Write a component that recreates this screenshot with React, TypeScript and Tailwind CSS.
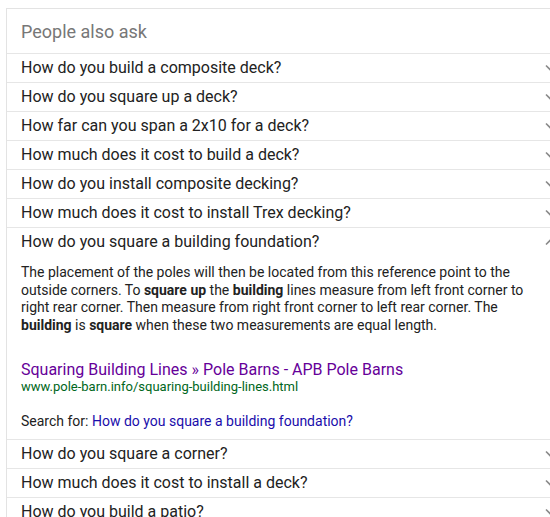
import React from "react"

const questions = [
  "How do you build a composite deck?",
  "How do you square up a deck?",
  "How far can you span a 2x10 for a deck?",
  "How much does it cost to build a deck?",
  "How do you install composite decking?",
  "How much does it cost to install Trex decking?",
]

const more = [
  "How do you square a corner?",
  "How much does it cost to install a deck?",
  "How do you build a patio?",
]

const Chevron = ({ up }: { up?: boolean }) => (
  <svg width="12" height="8" viewBox="0 0 12 8" className="shrink-0">
    <path
      d={up ? "M1 6.5 L6 1.5 L11 6.5" : "M1 1.5 L6 6.5 L11 1.5"}
      fill="none"
      stroke="#8a8a8a"
      strokeWidth="1.6"
    />
  </svg>
)

const Row = ({ text, up }: { text: string; up?: boolean }) => (
  <div className="h-[29px] border-t border-[#e6e6e6] flex items-center justify-between pl-[14px] pr-[11px]">
    <span className="text-[16px] text-[#222]">{text}</span>
    <Chevron up={up} />
  </div>
)

export default function App() {
  return (
    <div className="w-[550px] h-[517px] overflow-hidden bg-white" style={{ fontFamily: "Roboto, 'Liberation Sans', sans-serif" }}>
      <div className="ml-[6px] mt-[8px] w-[562px] border-l border-t border-[#e3e3e3]">
        <div className="h-[44px] flex items-center pl-[14px]">
          <span className="text-[18px] text-[#777]">People also ask</span>
        </div>
        {questions.map(q => <Row key={q} text={q} />)}
        <Row text="How do you square a building foundation?" up />
        <div className="pl-[14px] pr-[30px] pt-[8px] pb-[9px] text-[14px] text-[#222]">
          <p className="leading-[17.5px] w-[510px]">
            The placement of the poles will then be located from this reference point to the outside corners. To <b>square up</b> the <b>building</b> lines measure from left front corner to right rear corner. Then measure from right front corner to left rear corner. The <b>building</b> is <b>square</b> when these two measurements are equal length.
          </p>
          <div className="mt-[26px] text-[16px] leading-[20px] text-[#660099]">
            Squaring Building Lines » Pole Barns - APB Pole Barns
          </div>
          <div className="text-[13px] leading-[13px] text-[#006621]">
            www.pole-barn.info/squaring-building-lines.html
          </div>
          <div className="mt-[19px] leading-[18px]">
            Search for: <span className="text-[#1a0dab]">How do you square a building foundation?</span>
          </div>
        </div>
        {more.map(q => <Row key={q} text={q} />)}
      </div>
    </div>
  )
}
